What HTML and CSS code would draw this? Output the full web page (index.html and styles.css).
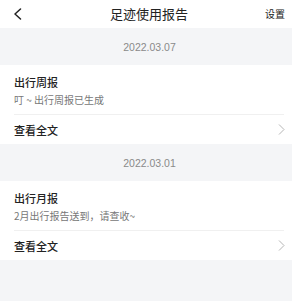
FILE: index.html
```html
<!DOCTYPE html>
<html lang="zh-CN">
<head>
<meta charset="utf-8">
<link rel="stylesheet" href="styles.css">
</head>
<body>
<div class="page">
  <header class="nav">
    <span class="back">
      <svg width="9" height="12" viewBox="0 0 9 12"><path d="M7.5 1 L2 6 L7.5 11" fill="none" stroke="#222" stroke-width="1.5" stroke-linecap="round" stroke-linejoin="round"/></svg>
    </span>
    <h1 class="title">足迹使用报告</h1>
    <span class="setting">设置</span>
  </header>

  <div class="date">2022.03.07</div>
  <section class="card">
    <div class="card-title">出行周报</div>
    <div class="card-sub">叮 ~ 出行周报已生成</div>
    <div class="card-link">
      <span>查看全文</span>
      <svg width="7" height="11" viewBox="0 0 7 11"><path d="M1 0.5 L6 5.5 L1 10.5" fill="none" stroke="#b5b5b5" stroke-width="1"/></svg>
    </div>
  </section>

  <div class="date">2022.03.01</div>
  <section class="card">
    <div class="card-title">出行月报</div>
    <div class="card-sub">2月出行报告送到，请查收~</div>
    <div class="card-link">
      <span>查看全文</span>
      <svg width="7" height="11" viewBox="0 0 7 11"><path d="M1 0.5 L6 5.5 L1 10.5" fill="none" stroke="#b5b5b5" stroke-width="1"/></svg>
    </div>
  </section>
</div>
</body>
</html>
```

FILE: styles.css
```css
html, body {
  margin: 0;
  padding: 0;
  background: #f4f5f7;
}
body {
  font-family: "Noto Sans CJK SC", "Noto Sans", sans-serif;
  color: #222;
}
.page {
  width: 292px;
  min-height: 301px;
  background: #f4f5f7;
}
.nav {
  height: 28px;
  background: #fff;
  display: grid;
  grid-template-columns: 60px 1fr 60px;
  align-items: center;
}
.back {
  display: flex;
  align-items: center;
  padding-left: 13px;
  height: 28px;
}
.title {
  margin: 0;
  text-align: center;
  font-size: 13px;
  font-weight: 400;
  line-height: 28px;
  color: #222;
  position: relative;
  left: 3px;
}
.setting {
  text-align: right;
  padding-right: 7px;
  font-size: 10px;
  line-height: 28px;
  color: #222;
}
.date {
  height: 37px;
  display: flex;
  align-items: center;
  justify-content: center;
  font-family: "Liberation Sans", Arial, sans-serif;
  font-size: 10.5px;
  color: #8a8a8a;
  padding: 1px 0 0 7px;
  box-sizing: border-box;
}
.card {
  background: #fff;
  padding: 10px 7px 0 14px;
  height: 79px;
  box-sizing: border-box;
}
.card-title {
  font-size: 11px;
  line-height: 14px;
  color: #222;
  font-weight: 500;
}
.card-sub {
  margin-top: 4px;
  margin-right: 1px;
  font-size: 10px;
  line-height: 14px;
  color: #777;
  padding-bottom: 7px;
  border-bottom: 1px solid #f0f0f0;
}
.card-link {
  height: 29px;
  display: flex;
  align-items: center;
  justify-content: space-between;
  font-size: 11px;
  color: #222;
  font-weight: 500;
}
```
